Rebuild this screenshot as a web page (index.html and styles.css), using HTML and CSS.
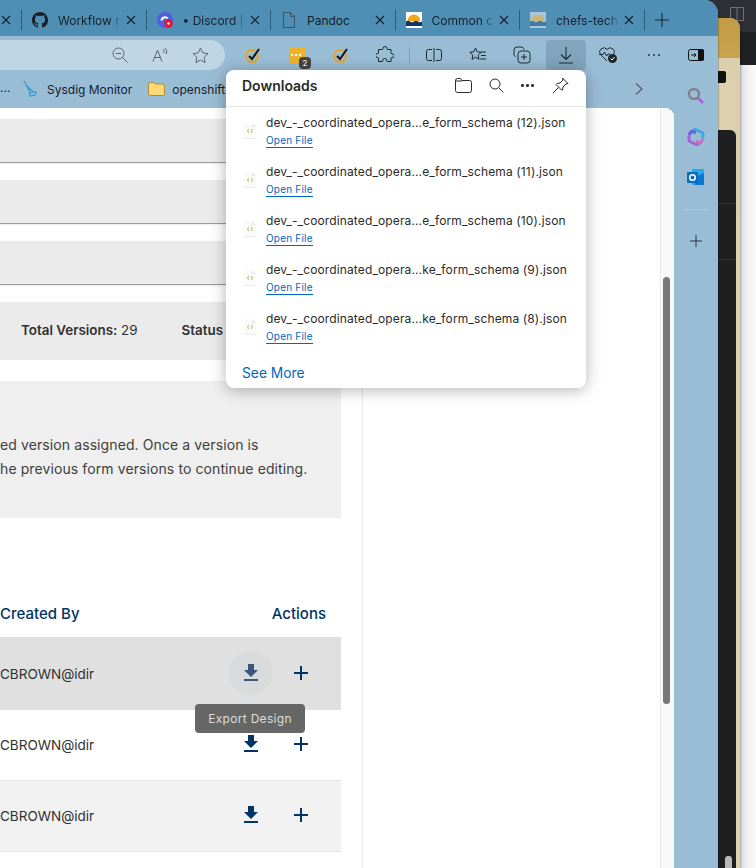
FILE: index.html
```html
<!DOCTYPE html>
<html lang="en">
<head>
    <meta charset="UTF-8">
    <meta name="viewport" content="width=device-width, initial-scale=1.0">
    <title>Form versions - Downloads</title>
    <link rel="stylesheet" href="styles.css">
</head>
<body>
    <!-- windows behind the browser -->
    <div class="back-window">
        <div class="back-titlebar">
            <svg class="back-layout" width="14" height="14" viewBox="0 0 14 14" fill="none" stroke="#6d7075"><path d="M.5.5h13v13H.5zM7 .5v13"/></svg>
        </div>
        <div class="back-toolbar"></div>
    </div>
    <div class="tan-window">
        <div class="tan-top"></div>
        <span class="tan-badge"></span>
        <div class="dark-panel">
            <span class="dark-line one"></span>
            <span class="dark-line two"></span>
            <span class="dark-thumb"></span>
        </div>
    </div>

    <div class="browser">
        <div class="tabstrip">
            <div class="tab first">
                <svg class="close" viewBox="0 0 10 10"><path d="M1 1l8 8M9 1l-8 8"/></svg>
            </div>
            <div class="tab">
                <svg class="favicon" viewBox="0 0 16 16" fill="#1b1f23"><path d="M8 0C3.58 0 0 3.58 0 8c0 3.54 2.29 6.53 5.47 7.59.4.07.55-.17.55-.38 0-.19-.01-.82-.01-1.49-2.01.37-2.53-.49-2.69-.94-.09-.23-.48-.94-.82-1.13-.28-.15-.68-.52-.01-.53.63-.01 1.08.58 1.23.82.72 1.21 1.87.87 2.33.66.07-.52.28-.87.51-1.07-1.78-.2-3.64-.89-3.64-3.95 0-.87.31-1.59.82-2.15-.08-.2-.36-1.02.08-2.12 0 0 .67-.21 2.2.82.64-.18 1.32-.27 2-.27.68 0 1.36.09 2 .27 1.53-1.04 2.2-.82 2.2-.82.44 1.1.16 1.92.08 2.12.51.56.82 1.27.82 2.15 0 3.07-1.87 3.75-3.65 3.95.29.25.54.73.54 1.48 0 1.07-.01 1.93-.01 2.2 0 .21.15.46.55.38A8.013 8.013 0 0016 8c0-4.42-3.58-8-8-8z"/></svg>
                <span class="tab-label">Workflow r</span>
                <svg class="close" viewBox="0 0 10 10"><path d="M1 1l8 8M9 1l-8 8"/></svg>
            </div>
            <div class="tab">
                <svg class="favicon" viewBox="0 0 16 16"><circle cx="8" cy="8" r="8" fill="#4f5fe0"/><path d="M3.5 8.5a4.5 4.5 0 0 1 8-2.6L9.8 7a2.4 2.4 0 0 0-4 1.6z" fill="#fff"/><circle cx="11.5" cy="11.5" r="4.2" fill="#e8112d"/><circle cx="11.5" cy="11.5" r="1.2" fill="#fff"/></svg>
                <span class="tab-label">&bull; Discord |</span>
                <svg class="close" viewBox="0 0 10 10"><path d="M1 1l8 8M9 1l-8 8"/></svg>
            </div>
            <div class="tab">
                <svg class="favicon" viewBox="0 0 16 16" fill="none" stroke="#3a5568" stroke-width="1"><path d="M2.500.5h7l4 4v11h-11zM9.500.5v4h4"/></svg>
                <span class="tab-label plain">Pandoc</span>
                <svg class="close" viewBox="0 0 10 10"><path d="M1 1l8 8M9 1l-8 8"/></svg>
            </div>
            <div class="tab">
                <svg class="favicon" viewBox="0 0 16 16"><rect width="16" height="16" fill="#fff"/><path d="M1.500 9a6.500 6.500 0 0 1 13 0z" fill="#f2a81d"/><path d="M0 9.500q2-1.500 4 0t4 0 4 0 4 0V14H0z" fill="#12356b"/></svg>
                <span class="tab-label">Common c</span>
                <svg class="close" viewBox="0 0 10 10"><path d="M1 1l8 8M9 1l-8 8"/></svg>
            </div>
            <div class="tab">
                <svg class="favicon" viewBox="0 0 16 16"><rect width="16" height="16" fill="#a9c6d8"/><path d="M1.500 9a6.500 6.500 0 0 1 13 0z" fill="#c9b678"/><path d="M0 9.500q2-1.500 4 0t4 0 4 0 4 0V14H0z" fill="#3f7ba6"/></svg>
                <span class="tab-label">chefs-tech</span>
                <svg class="close" viewBox="0 0 10 10"><path d="M1 1l8 8M9 1l-8 8"/></svg>
            </div>
            <svg class="new-tab" width="14" height="14" viewBox="0 0 14 14" stroke="#1b2730" stroke-width="1.1"><path d="M7 0v14M0 7h14"/></svg>
        </div>

        <div class="toolbar">
            <div class="address">
                <svg class="addr-icon" width="16" height="16" viewBox="0 0 16 16" fill="none" stroke="#59656e"><circle cx="6.500" cy="6.500" r="5.500"/><path d="M3.800 6.500h5.400M10.500 10.500l5 5"/></svg>
                <svg class="addr-icon" width="16" height="16" viewBox="0 0 16 16" fill="none" stroke="#59656e"><path d="M1 14.500L5.500 3l4.500 11.500M2.600 10.500h5.800M11 2.500a3 3 0 0 1 1 3.500M13 1a5.500 5.500 0 0 1 1.500 6"/></svg>
                <svg class="addr-icon" width="17" height="17" viewBox="0 0 17 17" fill="none" stroke="#59656e"><path d="M8.500 1l2.300 4.900 5.200.7-3.800 3.700.9 5.300-4.600-2.600-4.600 2.600.9-5.300L1 6.600l5.200-.7z"/></svg>
            </div>
            <div class="tool">
                <svg width="18" height="18" viewBox="0 0 18 18" fill="none"><circle cx="8" cy="10" r="6" stroke="#e5a52a" stroke-width="2"/><path d="M5 10l3 3 7-10" stroke="#111" stroke-width="2"/></svg>
            </div>
            <div class="tool">
                <svg width="26" height="26" viewBox="0 0 26 26"><rect x="5" y="5" width="16" height="16" rx="1" fill="#eeb32b"/><path d="M7 13h2M11 13h2M15 13h2" stroke="#fff" stroke-width="1.800"/></svg>
                <span class="ext-badge">2</span>
            </div>
            <div class="tool">
                <svg width="18" height="18" viewBox="0 0 18 18" fill="none"><circle cx="8" cy="10" r="6" stroke="#e5a52a" stroke-width="2"/><path d="M5 10l3 3 7-10" stroke="#111" stroke-width="2"/></svg>
            </div>
            <div class="tool">
                <svg width="18" height="18" viewBox="0 0 18 18" fill="none" stroke="#1d2a33"><path d="M7 2.500a2 2 0 0 1 4 0c0 .6 0 1 .5 1H15v3.700c0 .5.5.6 1 .5a2 2 0 0 1 0 4c-.5-.1-1 0-1 .5v3.300h-3.700c-.5 0-.6-.5-.5-1a2 2 0 0 0-4 0c.1.5 0 1-.5 1H2.500v-3.500c0-.5-.5-.6-1-.5a2 2 0 0 1 0-4c.5.100 1 0 1-.5V3.500H6.500c.5 0 .5-.4.5-1z"/></svg>
            </div>
            <span class="tool-sep"></span>
            <div class="tool">
                <svg width="16" height="14" viewBox="0 0 16 14" fill="none" stroke="#1d2a33"><path d="M8 0v14M6 1.500H2.500a2 2 0 0 0-2 2v7a2 2 0 0 0 2 2H6M10 1.500h3.500a2 2 0 0 1 2 2v7a2 2 0 0 1-2 2H10"/></svg>
            </div>
            <div class="tool">
                <svg width="18" height="16" viewBox="0 0 18 16" fill="none" stroke="#1d2a33"><path d="M6.500 1l1.700 3.800 4 .5-3 2.800.8 4.200-3.500-2.100-3.500 2.100.8-4.200-3-2.800 4-.5zM12 5h5M12 8.500h5M11 12h6"/></svg>
            </div>
            <div class="tool">
                <svg width="18" height="18" viewBox="0 0 18 18" fill="none" stroke="#1d2a33"><path d="M2.500 10.500a2 2 0 0 1-1.500-2V4a3 3 0 0 1 3-3h4a3 3 0 0 1 3 2.500"/><rect x="5" y="5" width="12" height="12" rx="3"/><path d="M11 8v6M8 11h6"/></svg>
            </div>
            <div class="tool active">
                <svg width="14" height="18" viewBox="0 0 14 18" fill="none" stroke="#1d2a33" stroke-width="1.100"><path d="M7 1v12M2 8.500L7 13.500 12 8.500M0 17h14"/></svg>
            </div>
            <div class="tool">
                <svg width="20" height="18" viewBox="0 0 20 18" fill="none"><path d="M9 15L2.500 8.500a4 4 0 0 1 6.500-5 4 4 0 0 1 6.500 5M1 8.500h4l1.500-2.500 2 4 1.500-2h2" stroke="#1d2a33"/><circle cx="14.500" cy="12.500" r="4.500" fill="#20262b"/><path d="M12.500 12.500l1.500 1.500 2.500-3" stroke="#fff"/></svg>
            </div>
            <div class="tool more"><span class="dots"><i></i><i></i><i></i></span></div>
            <div class="tool toggle">
                <svg width="16" height="12" viewBox="0 0 16 12"><rect x=".5" y=".5" width="15" height="11" rx="2" fill="none" stroke="#111"/><path d="M10 0h4a2 2 0 0 1 2 2v8a2 2 0 0 1-2 2h-4z" fill="#111"/><path d="M3 6h5M6 4l2 2-2 2" fill="none" stroke="#111"/></svg>
            </div>
        </div>

        <div class="lower">
            <div class="lower-main">
                <div class="bookmarks">
                    <span class="bm-more">...</span>
                    <svg class="bm-sysdig" width="14" height="18" viewBox="0 0 14 18" fill="none" stroke="#1f9fd0" stroke-width="1.200"><path d="M1 1l5 9M4 6l6 6M6 10l1 6 5-1 1-3-3 0M7 13l3-1"/></svg>
                    <span class="bm-label">Sysdig Monitor</span>
                    <svg class="bm-folder" width="17" height="14" viewBox="0 0 17 14"><path d="M.5 2.500a2 2 0 0 1 2-2h3.500l1.500 1.500h7a2 2 0 0 1 2 2v7.500a2 2 0 0 1-2 2h-12a2 2 0 0 1-2-2z" fill="#fbd975" stroke="#b58a2e"/></svg>
                    <span class="bm-label">openshift</span>
                    <svg class="bm-chevron" width="8" height="12" viewBox="0 0 8 12" fill="none" stroke="#4b5a66" stroke-width="1.100"><path d="M1 .5l6 5.500-6 5.500"/></svg>
                </div>

                <div class="page">
                    <main class="main">
                        <div class="bar"></div>
                        <div class="bar"></div>
                        <div class="bar"></div>
                        <div class="meta">
                            <span class="meta-item"><b>Total Versions:</b> 29</span>
                            <span class="meta-status"><b>Status</b></span>
                        </div>
                        <div class="notice">
                            <p>ed version assigned. Once a version is</p>
                            <p>he previous form versions to continue editing.</p>
                        </div>
                        <div class="table-head">
                            <span>Created By</span>
                            <span>Actions</span>
                        </div>
                        <div class="row hover">
                            <span class="creator">CBROWN@idir</span>
                            <span class="action round">
                                <svg width="24" height="24" viewBox="0 0 24 24" fill="#38597c"><path d="M5 20h14v-2H5M19 9h-4V3H9v6H5l7 7z"/></svg>
                            </span>
                            <svg class="plus" width="24" height="24" viewBox="0 0 24 24" fill="#003366"><path d="M19 13h-6v6h-2v-6H5v-2h6V5h2v6h6z"/></svg>
                        </div>
                        <div class="row">
                            <span class="creator">CBROWN@idir</span>
                            <span class="action">
                                <svg width="24" height="24" viewBox="0 0 24 24" fill="#003366"><path d="M5 20h14v-2H5M19 9h-4V3H9v6H5l7 7z"/></svg>
                            </span>
                            <svg class="plus" width="24" height="24" viewBox="0 0 24 24" fill="#003366"><path d="M19 13h-6v6h-2v-6H5v-2h6V5h2v6h6z"/></svg>
                        </div>
                        <div class="row odd">
                            <span class="creator">CBROWN@idir</span>
                            <span class="action">
                                <svg width="24" height="24" viewBox="0 0 24 24" fill="#003366"><path d="M5 20h14v-2H5M19 9h-4V3H9v6H5l7 7z"/></svg>
                            </span>
                            <svg class="plus" width="24" height="24" viewBox="0 0 24 24" fill="#003366"><path d="M19 13h-6v6h-2v-6H5v-2h6V5h2v6h6z"/></svg>
                        </div>
                    </main>
                    <div class="rightpane"></div>
                    <div class="scrollbar"><span class="thumb"></span></div>
                </div>
            </div>

            <aside class="sidebar">
                <svg class="side-icon" width="18" height="18" viewBox="0 0 18 18" fill="none"><circle cx="7" cy="7" r="5" stroke="#7d8489" stroke-width="2.400"/><path d="M11 11l5 5" stroke="#a468d6" stroke-width="3"/></svg>
                <svg class="side-icon" width="18" height="18" viewBox="0 0 18 18" fill="none"><path d="M5 3.500a4 4 0 0 1 5-1.500l5 2.500a2 2 0 0 1 1 1.800v4" stroke="#3fa7e6" stroke-width="3"/><path d="M13 14.500a4 4 0 0 1-5 1.500l-5-2.500a2 2 0 0 1-1-1.800v-4" stroke="#a65fd6" stroke-width="3"/><path d="M2.500 7.500c0-3 1.500-4 3.500-4l3 1.500" stroke="#6a63dc" stroke-width="3"/><path d="M15.500 10.500c0 3-1.500 4-3.500 4l-3-1.500" stroke="#c86fd0" stroke-width="3"/></svg>
                <svg class="side-icon" width="18" height="18" viewBox="0 0 18 18"><rect x="5" y="1" width="12" height="16" rx="1" fill="#28a8ea"/><path d="M8 9l9-4v12H8z" fill="#0a78d4"/><rect x="0" y="4" width="11" height="11" rx="1" fill="#0f6cbd"/><circle cx="5.500" cy="9.500" r="2.800" fill="none" stroke="#fff" stroke-width="1.500"/></svg>
                <span class="side-sep"></span>
                <svg class="side-plus" width="12" height="12" viewBox="0 0 12 12" stroke="#2a3640"><path d="M6 0v12M0 6h12"/></svg>
            </aside>
        </div>
    </div>

    <!-- tooltip over the hovered row -->
    <div class="tooltip">Export Design</div>

    <!-- downloads flyout -->
    <section class="downloads">
        <header class="dl-head">
            <h2>Downloads</h2>
            <div class="dl-tools">
                <svg width="17" height="15" viewBox="0 0 17 15" fill="none" stroke="#2a2a2a"><path d="M.5 3V2.500a2 2 0 0 1 2-2h3l1.500 2h7.500a2 2 0 0 1 2 2v8a2 2 0 0 1-2 2h-12a2 2 0 0 1-2-2zM.5 3h6.500"/></svg>
                <svg width="15" height="15" viewBox="0 0 15 15" fill="none" stroke="#2a2a2a"><circle cx="6" cy="6" r="5"/><path d="M9.500 9.500l5 5"/></svg>
                <span class="dots"><i></i><i></i><i></i></span>
                <svg width="17" height="17" viewBox="0 0 17 17" fill="none" stroke="#2a2a2a"><path d="M10.500 1l5.500 5.500-2 .5-3 3-.5 3L9.500 13 4 7.500l1-1 3-.5 3-3zM6.500 10.500L1 16"/></svg>
            </div>
        </header>
        <ul class="dl-list">
            <li class="dl-item">
                <svg class="file-icon" width="12" height="16" viewBox="0 0 12 16"><path d="M0 0h8l4 4v12H0z" fill="#fafafa"/><path d="M8 0l4 4H8z" fill="#e9e9e9"/><path d="M0 15.500h12" stroke="#ececec"/><path d="M4.500 6q-1.500 2 0 4M7.500 6q1.500 2 0 4" fill="none" stroke="#c2bb62" stroke-width="1.100"/></svg>
                <div class="dl-text"><div class="dl-name">dev_-_coordinated_opera...e_form_schema (12).json</div><a class="dl-open">Open File</a></div>
            </li>
            <li class="dl-item">
                <svg class="file-icon" width="12" height="16" viewBox="0 0 12 16"><path d="M0 0h8l4 4v12H0z" fill="#fafafa"/><path d="M8 0l4 4H8z" fill="#e9e9e9"/><path d="M0 15.500h12" stroke="#ececec"/><path d="M4.500 6q-1.500 2 0 4M7.500 6q1.500 2 0 4" fill="none" stroke="#c2bb62" stroke-width="1.100"/></svg>
                <div class="dl-text"><div class="dl-name">dev_-_coordinated_opera...e_form_schema (11).json</div><a class="dl-open">Open File</a></div>
            </li>
            <li class="dl-item">
                <svg class="file-icon" width="12" height="16" viewBox="0 0 12 16"><path d="M0 0h8l4 4v12H0z" fill="#fafafa"/><path d="M8 0l4 4H8z" fill="#e9e9e9"/><path d="M0 15.500h12" stroke="#ececec"/><path d="M4.500 6q-1.500 2 0 4M7.500 6q1.500 2 0 4" fill="none" stroke="#c2bb62" stroke-width="1.100"/></svg>
                <div class="dl-text"><div class="dl-name">dev_-_coordinated_opera...e_form_schema (10).json</div><a class="dl-open">Open File</a></div>
            </li>
            <li class="dl-item">
                <svg class="file-icon" width="12" height="16" viewBox="0 0 12 16"><path d="M0 0h8l4 4v12H0z" fill="#fafafa"/><path d="M8 0l4 4H8z" fill="#e9e9e9"/><path d="M0 15.500h12" stroke="#ececec"/><path d="M4.500 6q-1.500 2 0 4M7.500 6q1.500 2 0 4" fill="none" stroke="#c2bb62" stroke-width="1.100"/></svg>
                <div class="dl-text"><div class="dl-name">dev_-_coordinated_opera...ke_form_schema (9).json</div><a class="dl-open">Open File</a></div>
            </li>
            <li class="dl-item">
                <svg class="file-icon" width="12" height="16" viewBox="0 0 12 16"><path d="M0 0h8l4 4v12H0z" fill="#fafafa"/><path d="M8 0l4 4H8z" fill="#e9e9e9"/><path d="M0 15.500h12" stroke="#ececec"/><path d="M4.500 6q-1.500 2 0 4M7.500 6q1.500 2 0 4" fill="none" stroke="#c2bb62" stroke-width="1.100"/></svg>
                <div class="dl-text"><div class="dl-name">dev_-_coordinated_opera...ke_form_schema (8).json</div><a class="dl-open">Open File</a></div>
            </li>
        </ul>
        <a class="dl-more">See More</a>
    </section>
</body>
</html>
```

FILE: styles.css
```css
* {
    box-sizing: border-box;
}
body {
    margin: 0;
    width: 756px;
    height: 868px;
    position: relative;
    overflow: hidden;
    background: linear-gradient(to right, #dcdcdc 740px, #f1f1f1 748px, #fbfbfb);
    font-family: Inter, "Liberation Sans", sans-serif;
    color: #313132;
}

/* desktop windows behind */
.back-window {
    position: absolute;
    top: 0;
    right: 0;
    width: 60px;
    height: 65px;
    background: #1e2024;
}
.back-titlebar {
    height: 32px;
    background: #2e3035;
    padding: 7px 0 0 34px;
}
.back-layout {
    display: block;
}
.tan-window {
    position: absolute;
    left: 690px;
    top: 18px;
    width: 50px;
    height: 850px;
    border-radius: 0 10px 0 0;
    overflow: hidden;
    background: linear-gradient(to bottom, #dccfae, #e0d2ae);
    box-shadow: 1px 0 2px rgba(0, 0, 0, 0.25);
}
.tan-top {
    height: 40px;
    background: linear-gradient(to bottom, #c39a45, #c9a450);
}
.tan-badge {
    position: absolute;
    left: 28px;
    top: 53px;
    width: 8px;
    height: 12px;
    background: #111;
    border-radius: 0 2px 2px 0;
}
.dark-panel {
    position: absolute;
    left: 0;
    top: 112px;
    width: 46px;
    bottom: 0;
    background: #1d1f21;
    border-radius: 0 6px 0 0;
}
.dark-line {
    position: absolute;
    left: 0;
    right: 0;
    height: 1px;
    background: #34373a;
}
.dark-line.one {
    top: 73px;
}
.dark-line.two {
    top: 129px;
}
.dark-thumb {
    position: absolute;
    left: 35px;
    bottom: 0;
    width: 7px;
    height: 12px;
    border-radius: 3px 3px 0 0;
    background: #b9b9b9;
}

/* browser frame */
.browser {
    position: absolute;
    left: 0;
    top: 0;
    width: 718px;
    height: 868px;
    display: flex;
    flex-direction: column;
    border-radius: 0 14px 0 0;
    overflow: hidden;
    background: #9abdd6;
    box-shadow: 1px 0 1px rgba(0, 0, 0, 0.2);
}
.tabstrip {
    height: 36px;
    flex: none;
    display: flex;
    align-items: center;
    background: #508fb5;
    padding-top: 4px;
}
.tab {
    width: 124.5px;
    height: 20px;
    flex: none;
    display: flex;
    align-items: center;
    padding: 0 10px;
    gap: 10px;
    border-right: 1px solid #2e5b78;
}
.tab.first {
    width: 22px;
    padding: 0 0 0 1px;
}
.favicon {
    width: 16px;
    height: 16px;
    flex: none;
}
.tab-label {
    flex: 1;
    min-width: 0;
    margin-right: -6px;
    white-space: nowrap;
    overflow: hidden;
    font-size: 12px;
    color: #14202a;
    -webkit-mask-image: linear-gradient(to right, #000 80%, transparent);
    mask-image: linear-gradient(to right, #000 80%, transparent);
}
.tab-label.plain {
    -webkit-mask-image: none;
    mask-image: none;
}
.close {
    flex: none;
    width: 10px;
    height: 10px;
    fill: none;
    stroke: #14202a;
    stroke-width: 1.1;
}
.new-tab {
    margin-left: 10px;
}

.toolbar {
    height: 36px;
    flex: none;
    display: flex;
    align-items: flex-start;
    padding-top: 4px;
}
.address {
    width: 225px;
    height: 30px;
    margin-right: 6px;
    flex: none;
    display: flex;
    align-items: center;
    justify-content: flex-end;
    gap: 24px;
    padding-right: 16px;
    background: #bfd7e5;
    border-radius: 0 15px 15px 0;
}
.tool {
    width: 44px;
    height: 30px;
    flex: none;
    display: flex;
    align-items: center;
    justify-content: center;
    position: relative;
}
.tool.active {
    width: 40px;
    margin-left: 2px;
    background: #82a5bc;
    border-radius: 4px;
}
.tool.more {
    margin-left: 2px;
}
.tool.toggle {
    width: 40px;
}
.tool-sep {
    width: 1px;
    height: 16px;
    margin: 7px 2px 0 2px;
    background: #7f9cb0;
    flex: none;
}
.ext-badge {
    position: absolute;
    left: 24px;
    top: 17px;
    width: 12px;
    height: 12px;
    border-radius: 4px;
    background: #454545;
    color: #fff;
    font-size: 8px;
    line-height: 12px;
    text-align: center;
}
.dots {
    display: inline-flex;
    gap: 2.500px;
}
.dots i {
    width: 2.500px;
    height: 2.500px;
    border-radius: 50%;
    background: #333;
}

.lower {
    flex: 1;
    min-height: 0;
    display: flex;
}
.lower-main {
    width: 674px;
    flex: none;
    display: flex;
    flex-direction: column;
}
.bookmarks {
    height: 36px;
    flex: none;
    display: flex;
    align-items: center;
    padding-bottom: 2px;
    font-size: 12px;
    color: #14202a;
}
.bm-more {
    width: 23px;
    padding-bottom: 4px;
}
.bm-sysdig {
    margin-right: 10px;
}
.bm-folder {
    margin: 0 7px 0 16px;
}
.bm-label {
    white-space: nowrap;
}
.bm-chevron {
    margin-left: 410px;
}

/* page area */
.page {
    flex: 1;
    min-height: 0;
    display: flex;
    background: #fff;
    border-radius: 0 9px 0 0;
    overflow: hidden;
}
.main {
    width: 341px;
    flex: none;
    padding-top: 11px;
}
.bar {
    height: 44px;
    margin-bottom: 17px;
    background: #ebebeb;
    border-bottom: 1.500px solid #9b9b9b;
    box-shadow: 0 1px 2px rgba(0, 0, 0, 0.08);
}
.meta {
    height: 58px;
    margin-bottom: 21px;
    background: #ebebeb;
    display: flex;
    align-items: center;
    font-size: 13.4px;
    color: #313132;
    white-space: nowrap;
    padding: 0 0 2px 21px;
}
.meta b {
    font-weight: 600;
}
.meta-status {
    margin-left: 44px;
}
.notice {
    height: 137px;
    background: #efefef;
    padding-top: 52px;
    font-size: 14px;
    line-height: 24px;
    letter-spacing: 0.1px;
    color: #3e3e3e;
}
.notice p {
    margin: 0;
    white-space: nowrap;
}
.table-head {
    height: 119px;
    display: flex;
    justify-content: space-between;
    align-items: flex-end;
    padding: 0 15px 14px 0;
    font-size: 15px;
    font-weight: 500;
    color: #003366;
}
.row {
    height: 71px;
    display: flex;
    align-items: center;
    border-bottom: 1px solid #e3e3e3;
    font-size: 13.5px;
    color: #313132;
    padding-right: 28px;
}
.row.hover {
    height: 73px;
    background: #e0e0e0;
    border-bottom: none;
}
.row.odd {
    background: #f2f2f2;
}
.creator {
    flex: 1;
}
.action {
    width: 44px;
    height: 44px;
    margin: 0 16px 2px 0;
    flex: none;
    display: flex;
    align-items: center;
    justify-content: center;
    border-radius: 50%;
}
.action.round {
    background: #d8dadc;
}
.plus {
    flex: none;
    margin-bottom: 2px;
}
.rightpane {
    flex: 1;
    margin-left: 21px;
    border-left: 1px solid #e9e9e9;
}
.scrollbar {
    width: 14px;
    flex: none;
    background: #f9f9f9;
    border-left: 1px solid #e9e9e9;
    padding: 169px 0 0 2px;
}
.thumb {
    display: block;
    width: 7px;
    height: 427px;
    border-radius: 4px;
    background: #787878;
}
.sidebar {
    width: 44px;
    flex: none;
    display: flex;
    flex-direction: column;
    align-items: center;
    padding-top: 15px;
}
.side-icon {
    flex: none;
    margin-bottom: 22.5px;
}
.side-sep {
    width: 28px;
    height: 1px;
    background: #b8c4c8;
}
.side-plus {
    margin-top: 25px;
}

/* tooltip */
.tooltip {
    position: absolute;
    left: 195px;
    top: 704px;
    width: 110px;
    height: 29px;
    border-radius: 4px;
    background: #666;
    color: #dcdcdc;
    font-size: 12px;
    line-height: 29px;
    text-align: center;
    letter-spacing: 0.3px;
}

/* downloads flyout */
.downloads {
    position: absolute;
    left: 226px;
    top: 70px;
    width: 360px;
    height: 318px;
    background: #fff;
    border-radius: 8px;
    box-shadow: 0 2px 16px rgba(0, 0, 0, 0.3);
    display: flex;
    flex-direction: column;
}
.dl-head {
    height: 37px;
    flex: none;
    display: flex;
    align-items: center;
    justify-content: space-between;
    padding: 0 17px 5px 16px;
    border-bottom: 1px solid #e6e6e6;
}
.dl-head h2 {
    margin: 0;
    font-size: 14px;
    font-weight: 600;
    color: #2a2a2a;
}
.dl-tools {
    display: flex;
    align-items: center;
    gap: 17px;
}
.dl-tools .dots {
    width: 14px;
}
.dl-list {
    list-style: none;
    margin: 0;
    padding: 0;
    flex: 1;
}
.dl-item {
    height: 49px;
    display: flex;
    align-items: flex-start;
    padding: 8px 0 0 18px;
}
.file-icon {
    margin: 8px 10px 0 0;
    flex: none;
}
.dl-name {
    font-size: 12px;
    line-height: 16px;
    letter-spacing: 0.13px;
    color: #2a2a2a;
    white-space: nowrap;
}
.dl-open {
    display: block;
    width: fit-content;
    margin-top: 3px;
    font-size: 10px;
    line-height: 13px;
    letter-spacing: 0.2px;
    color: #0067c0;
    border-bottom: 1px solid #0067c0;
}
.dl-more {
    padding: 0 0 6px 16px;
    font-size: 13.8px;
    line-height: 17px;
    color: #0067c0;
}
```
